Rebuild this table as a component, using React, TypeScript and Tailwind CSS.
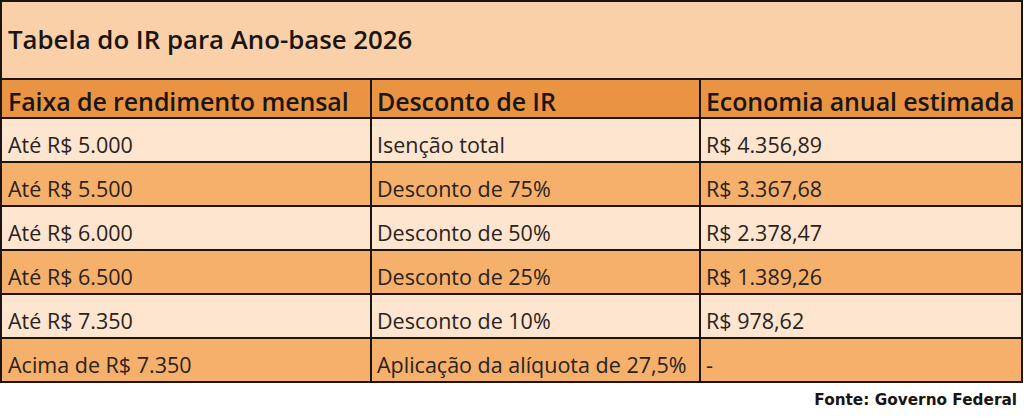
const rows = [
  { faixa: 'Até R$ 5.000', desconto: 'Isenção total', economia: 'R$ 4.356,89' },
  { faixa: 'Até R$ 5.500', desconto: 'Desconto de 75%', economia: 'R$ 3.367,68' },
  { faixa: 'Até R$ 6.000', desconto: 'Desconto de 50%', economia: 'R$ 2.378,47' },
  { faixa: 'Até R$ 6.500', desconto: 'Desconto de 25%', economia: 'R$ 1.389,26' },
  { faixa: 'Até R$ 7.350', desconto: 'Desconto de 10%', economia: 'R$ 978,62' },
  { faixa: 'Acima de R$ 7.350', desconto: 'Aplicação da alíquota de 27,5%', economia: '-' },
];

export default function App() {
  return (
    <div className="w-[1024px] h-[417px] bg-white font-['Open_Sans','Liberation_Sans',sans-serif] overflow-hidden">
      <table className="w-[1023px] border-collapse border-2 border-[#1c1410] table-fixed">
        <colgroup>
          <col className="w-[370px]" />
          <col className="w-[329px]" />
          <col />
        </colgroup>
        <thead>
          <tr className="h-[78px] bg-[#f9d0a8]">
            <th colSpan={3} className="text-left align-middle pl-[6px] pb-[2px] text-[25.8px] font-semibold text-[#1a1512] border-2 border-[#1c1410]">
              Tabela do IR para Ano-base 2026
            </th>
          </tr>
          <tr className="h-[39px] bg-[#e99443]">
            <th className="text-left align-bottom pl-[6px] pb-[1px] text-[25px] leading-[30px] font-semibold tracking-[-0.1px] text-[#1a1512] border-2 border-[#1c1410]">Faixa de rendimento mensal</th>
            <th className="text-left align-bottom pl-[5px] pb-[1px] text-[25px] leading-[30px] font-semibold tracking-[-0.1px] text-[#1a1512] border-2 border-[#1c1410]">Desconto de IR</th>
            <th className="text-left align-bottom pl-[5px] pb-[1px] text-[25px] leading-[30px] font-semibold tracking-[-0.1px] text-[#1a1512] border-2 border-[#1c1410]">Economia anual estimada</th>
          </tr>
        </thead>
        <tbody>
          {rows.map((r, i) => (
            <tr key={r.faixa} className={`h-[44px] ${i % 2 === 0 ? 'bg-[#fde5cf]' : 'bg-[#f5b06c]'}`}>
              <td className="align-bottom pl-[6px] pb-[3px] text-[21.5px] leading-[26px] text-[#2a221d] border-2 border-[#1c1410]">{r.faixa}</td>
              <td className="align-bottom pl-[5px] pb-[3px] text-[21.5px] leading-[26px] text-[#2a221d] border-2 border-[#1c1410]">{r.desconto}</td>
              <td className="align-bottom pl-[5px] pb-[3px] text-[21.5px] leading-[26px] text-[#2a221d] border-2 border-[#1c1410]">{r.economia}</td>
            </tr>
          ))}
        </tbody>
      </table>
      <div className="flex justify-end pr-[7px] pt-[7px] font-['DejaVu_Sans',sans-serif] text-[15.3px] leading-[20px] font-bold text-[#1a1512]">
        Fonte: Governo Federal
      </div>
    </div>
  );
}
